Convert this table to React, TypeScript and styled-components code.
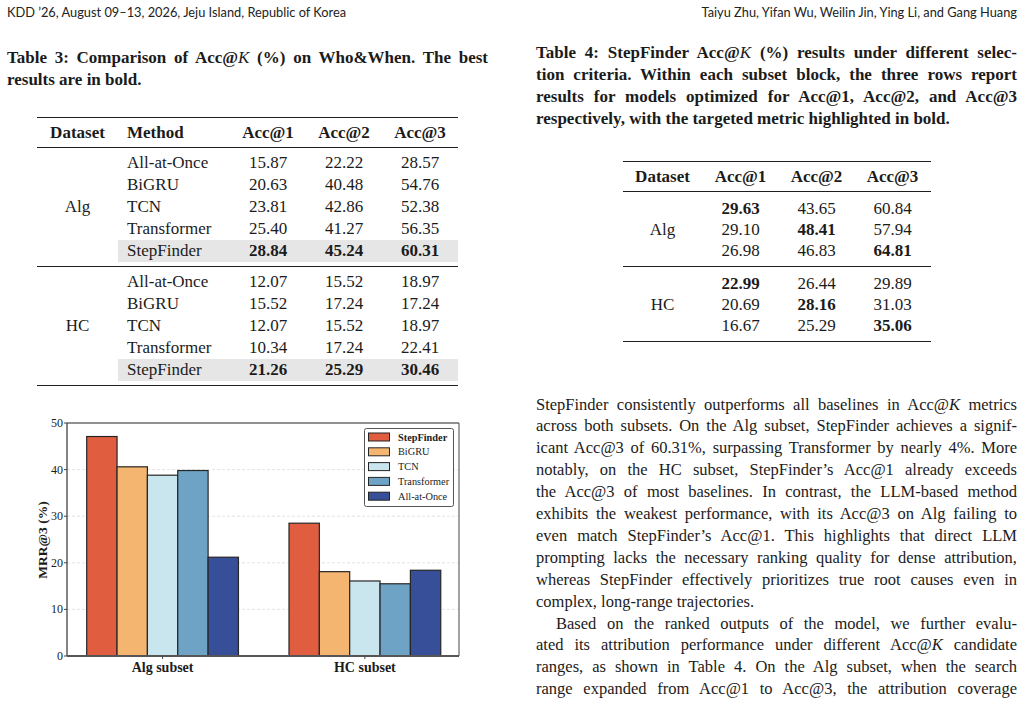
import React from "react";
import styled, { createGlobalStyle } from "styled-components";

const SERIF = "'Liberation Serif', 'Times New Roman', serif";
const SANS = "Lato, 'Open Sans', sans-serif";

const GlobalStyle = createGlobalStyle`
  html, body {
    margin: 0;
    padding: 0;
    background: #ffffff;
  }
  body {
    font-family: ${SERIF};
    color: #1b1b1b;
  }
`;

const Page = styled.div`
  width: 1025px;
  height: 704px;
  overflow: hidden;
  padding: 0 8px 0 7px;
  box-sizing: border-box;
`;

const RunningHead = styled.div`
  display: flex;
  justify-content: space-between;
  align-items: center;
  height: 24px;
  font-family: ${SANS};
  font-size: 12.8px;
  color: #222;
`;

const Columns = styled.div`
  display: grid;
  grid-template-columns: 481px 481px;
  column-gap: 48px;
`;

const Column = styled.div`
  display: flex;
  flex-direction: column;
`;

const Caption = styled.div<{ $top: number }>`
  margin-top: ${(p) => p.$top}px;
  font-size: 17px;
  font-weight: bold;
  line-height: 22px;
`;

const Line = styled.span<{ $last?: boolean; $indent?: boolean }>`
  display: block;
  text-align: justify;
  text-align-last: ${(p) => (p.$last ? "left" : "justify")};
  padding-left: ${(p) => (p.$indent ? "20px" : "0")};
`;

const MathK = styled.i`
  font-weight: normal;
`;

const TableBox = styled.div<{ $width: number; $top: number }>`
  width: ${(p) => p.$width}px;
  margin: ${(p) => p.$top}px auto 0;
  border-top: 1.5px solid #1e1e1e;
  border-bottom: 1.5px solid #1e1e1e;
  font-size: 17px;
`;

const HeadRow = styled.div<{ $cols: string }>`
  display: grid;
  grid-template-columns: ${(p) => p.$cols};
  height: 29px;
  align-items: center;
  font-weight: bold;
  border-bottom: 1px solid #1e1e1e;
`;

const Group = styled.div<{ $cols: string; $pad: string; $rule?: boolean }>`
  display: grid;
  grid-template-columns: ${(p) => p.$cols};
  padding: ${(p) => p.$pad};
  border-bottom: ${(p) => (p.$rule ? "1px solid #1e1e1e" : "none")};
`;

const GroupLabel = styled.div<{ $rows: number }>`
  grid-row: span ${(p) => p.$rows};
  display: flex;
  align-items: center;
  justify-content: center;
`;

const DataRow = styled.div<{ $span: number; $height: number; $shade?: boolean }>`
  grid-column: span ${(p) => p.$span};
  display: grid;
  grid-template-columns: subgrid;
  height: ${(p) => p.$height}px;
  align-items: center;
  background: ${(p) => (p.$shade ? "#e6e6e6" : "transparent")};
`;

const Cell = styled.div<{ $align?: "left" | "center"; $bold?: boolean }>`
  text-align: ${(p) => p.$align ?? "center"};
  font-weight: ${(p) => (p.$bold ? "bold" : "inherit")};
  padding-left: ${(p) => (p.$align === "left" ? "9px" : "0")};
  white-space: nowrap;
`;

const ChartFrame = styled.svg`
  display: block;
  margin-top: 13.5px;
`;

const ChartText = styled.text<{ $size: number; $bold?: boolean }>`
  font-family: ${SERIF};
  font-size: ${(p) => p.$size}px;
  font-weight: ${(p) => (p.$bold ? "bold" : "normal")};
  fill: #1c1c1c;
`;

const Body = styled.div`
  margin-top: 51.5px;
  font-size: 16.5px;
  line-height: 21.9px;
`;

const T3_COLS = "81px 112px 76px 76px 76px";
const T4_COLS = "80px 76px 76px 76px";

type T3Row = [string, string, string, string, boolean?];

const table3: { name: string; rows: T3Row[] }[] = [
  {
    name: "Alg",
    rows: [
      ["All-at-Once", "15.87", "22.22", "28.57"],
      ["BiGRU", "20.63", "40.48", "54.76"],
      ["TCN", "23.81", "42.86", "52.38"],
      ["Transformer", "25.40", "41.27", "56.35"],
      ["StepFinder", "28.84", "45.24", "60.31", true],
    ],
  },
  {
    name: "HC",
    rows: [
      ["All-at-Once", "12.07", "15.52", "18.97"],
      ["BiGRU", "15.52", "17.24", "17.24"],
      ["TCN", "12.07", "15.52", "18.97"],
      ["Transformer", "10.34", "17.24", "22.41"],
      ["StepFinder", "21.26", "25.29", "30.46", true],
    ],
  },
];

const table4: { name: string; rows: string[][] }[] = [
  {
    name: "Alg",
    rows: [
      ["29.63", "43.65", "60.84"],
      ["29.10", "48.41", "57.94"],
      ["26.98", "46.83", "64.81"],
    ],
  },
  {
    name: "HC",
    rows: [
      ["22.99", "26.44", "29.89"],
      ["20.69", "28.16", "31.03"],
      ["16.67", "25.29", "35.06"],
    ],
  },
];

const series = [
  { name: "StepFinder", color: "#e05d40", alg: 47.1, hc: 28.5 },
  { name: "BiGRU", color: "#f4b571", alg: 40.6, hc: 18.1 },
  { name: "TCN", color: "#c9e5ed", alg: 38.8, hc: 16.1 },
  { name: "Transformer", color: "#6ea3c6", alg: 39.8, hc: 15.5 },
  { name: "All-at-Once", color: "#364f98", alg: 21.2, hc: 18.4 },
];

// chart geometry, in svg units
const X0 = 60;
const X1 = 452;
const Y0 = 256;
const Y50 = 23;
const PER = (Y0 - Y50) / 50;
const BAR = 30.35;
const yOf = (v: number) => Y0 - v * PER;

function BarChart() {
  const groups = [
    { label: "Alg subset", start: 79.7, key: "alg" as const },
    { label: "HC subset", start: 282, key: "hc" as const },
  ];
  return (
    <ChartFrame width={481} height={290} viewBox="0 0 481 290">
      {[10, 20, 30, 40].map((t) => (
        <line
          key={t}
          x1={X0}
          x2={X1}
          y1={yOf(t)}
          y2={yOf(t)}
          stroke="#dcdcdc"
          strokeWidth={0.8}
          strokeDasharray="3 2"
        />
      ))}
      {groups.map((g) =>
        series.map((s, i) => (
          <rect
            key={g.key + s.name}
            x={g.start + i * BAR}
            y={yOf(s[g.key])}
            width={BAR}
            height={Y0 - yOf(s[g.key])}
            fill={s.color}
            stroke="#262626"
            strokeWidth={1.2}
          />
        ))
      )}
      <line x1={X0} x2={X1} y1={Y50} y2={Y50} stroke="#222" strokeWidth={1} />
      <line x1={X0} x2={X0} y1={Y50} y2={Y0} stroke="#333" strokeWidth={1.2} />
      <line x1={X1} x2={X1} y1={Y50} y2={Y0} stroke="#666" strokeWidth={1.2} />
      <line x1={X0} x2={X1} y1={Y0} y2={Y0} stroke="#555" strokeWidth={2} />
      {[0, 10, 20, 30, 40, 50].map((t) => (
        <g key={t}>
          <line x1={X0 - 3} x2={X0} y1={yOf(t)} y2={yOf(t)} stroke="#444" strokeWidth={1} />
          <ChartText x={56} y={yOf(t) + 4} $size={12} textAnchor="end">
            {t}
          </ChartText>
        </g>
      ))}
      {groups.map((g) => (
        <g key={g.label}>
          <line
            x1={g.start + BAR * 2.5}
            x2={g.start + BAR * 2.5}
            y1={Y0}
            y2={Y0 + 3}
            stroke="#444"
          />
          <ChartText x={g.start + BAR * 2.5} y={Y0 + 16} $size={14} $bold textAnchor="middle">
            {g.label}
          </ChartText>
        </g>
      ))}
      <ChartText transform="translate(40 140) rotate(-90)" $size={13.5} $bold textAnchor="middle">
        MRR@3 (%)
      </ChartText>
      <rect x={357.5} y={28.5} width={89} height={78} rx={2} fill="#fff" stroke="#555" strokeWidth={1} />
      {series.map((s, i) => (
        <g key={s.name}>
          <rect
            x={361.5}
            y={33 + i * 14.8}
            width={21}
            height={8}
            fill={s.color}
            stroke="#262626"
            strokeWidth={1}
          />
          <ChartText x={391} y={40.5 + i * 14.8} $size={10.3} $bold={i === 0}>
            {s.name}
          </ChartText>
        </g>
      ))}
    </ChartFrame>
  );
}

function Table3() {
  return (
    <TableBox $width={421} $top={26}>
      <HeadRow $cols={T3_COLS}>
        <Cell>Dataset</Cell>
        <Cell $align="left">Method</Cell>
        <Cell>Acc@1</Cell>
        <Cell>Acc@2</Cell>
        <Cell>Acc@3</Cell>
      </HeadRow>
      {table3.map((g, gi) => (
        <Group key={g.name} $cols={T3_COLS} $pad="4px 0" $rule={gi === 0}>
          <GroupLabel $rows={g.rows.length}>{g.name}</GroupLabel>
          {g.rows.map((r) => (
            <DataRow key={r[0]} $span={4} $height={22} $shade={r[4]}>
              <Cell $align="left">{r[0]}</Cell>
              <Cell $bold={r[4]}>{r[1]}</Cell>
              <Cell $bold={r[4]}>{r[2]}</Cell>
              <Cell $bold={r[4]}>{r[3]}</Cell>
            </DataRow>
          ))}
        </Group>
      ))}
    </TableBox>
  );
}

function Table4() {
  return (
    <TableBox $width={308} $top={31}>
      <HeadRow $cols={T4_COLS}>
        <Cell>Dataset</Cell>
        <Cell>Acc@1</Cell>
        <Cell>Acc@2</Cell>
        <Cell>Acc@3</Cell>
      </HeadRow>
      {table4.map((g, gi) => (
        <Group key={g.name} $cols={T4_COLS} $pad="6px 0 5px" $rule={gi === 0}>
          <GroupLabel $rows={g.rows.length}>{g.name}</GroupLabel>
          {g.rows.map((r, ri) => (
            <DataRow key={ri} $span={3} $height={21}>
              {r.map((v, ci) => (
                <Cell key={ci} $bold={ci === ri}>
                  {v}
                </Cell>
              ))}
            </DataRow>
          ))}
        </Group>
      ))}
    </TableBox>
  );
}

export default function App() {
  return (
    <>
      <GlobalStyle />
      <Page>
        <RunningHead>
          <span>KDD ’26, August 09–13, 2026, Jeju Island, Republic of Korea</span>
          <span>Taiyu Zhu, Yifan Wu, Weilin Jin, Ying Li, and Gang Huang</span>
        </RunningHead>
        <Columns>
          <Column>
            <Caption $top={23}>
              <Line>
                Table 3: Comparison of Acc@<MathK>K</MathK> (%) on Who&amp;When. The best
              </Line>
              <Line $last>results are in bold.</Line>
            </Caption>
            <Table3 />
            <BarChart />
          </Column>
          <Column>
            <Caption $top={18}>
              <Line>
                Table 4: StepFinder Acc@<MathK>K</MathK> (%) results under different selec-
              </Line>
              <Line>tion criteria. Within each subset block, the three rows report</Line>
              <Line>results for models optimized for Acc@1, Acc@2, and Acc@3</Line>
              <Line $last>respectively, with the targeted metric highlighted in bold.</Line>
            </Caption>
            <Table4 />
            <Body>
              <Line>
                StepFinder consistently outperforms all baselines in Acc@<MathK>K</MathK> metrics
              </Line>
              <Line>across both subsets. On the Alg subset, StepFinder achieves a signif-</Line>
              <Line>icant Acc@3 of 60.31%, surpassing Transformer by nearly 4%. More</Line>
              <Line>notably, on the HC subset, StepFinder’s Acc@1 already exceeds</Line>
              <Line>the Acc@3 of most baselines. In contrast, the LLM-based method</Line>
              <Line>exhibits the weakest performance, with its Acc@3 on Alg failing to</Line>
              <Line>even match StepFinder’s Acc@1. This highlights that direct LLM</Line>
              <Line>prompting lacks the necessary ranking quality for dense attribution,</Line>
              <Line>whereas StepFinder effectively prioritizes true root causes even in</Line>
              <Line $last>complex, long-range trajectories.</Line>
              <Line $indent>Based on the ranked outputs of the model, we further evalu-</Line>
              <Line>
                ated its attribution performance under different Acc@<MathK>K</MathK> candidate
              </Line>
              <Line>ranges, as shown in Table 4. On the Alg subset, when the search</Line>
              <Line>range expanded from Acc@1 to Acc@3, the attribution coverage</Line>
            </Body>
          </Column>
        </Columns>
      </Page>
    </>
  );
}
